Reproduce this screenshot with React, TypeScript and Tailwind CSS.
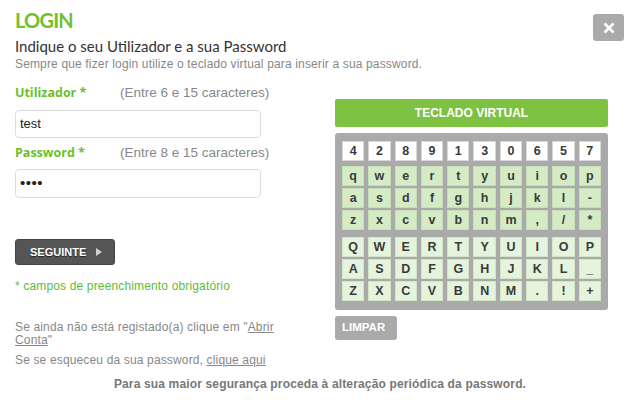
import React from "react";

const numbers = ["4", "2", "8", "9", "1", "3", "0", "6", "5", "7"];
const lower = [
  ["q", "w", "e", "r", "t", "y", "u", "i", "o", "p"],
  ["a", "s", "d", "f", "g", "h", "j", "k", "l", "-"],
  ["z", "x", "c", "v", "b", "n", "m", ",", "/", "*"],
];
const upper = [
  ["Q", "W", "E", "R", "T", "Y", "U", "I", "O", "P"],
  ["A", "S", "D", "F", "G", "H", "J", "K", "L", "_"],
  ["Z", "X", "C", "V", "B", "N", "M", ".", "!", "+"],
];

function Key({ k, variant }: { k: string; variant: "num" | "low" | "up" }) {
  const cls =
    variant === "num"
      ? "bg-white border-[#d8d8d8]"
      : variant === "low"
      ? "bg-[#d5ebc5] border-[#c6dfb5]"
      : "bg-[#e5f4dc] border-[#d3e6c7]";
  return (
    <div
      className={`h-[20px] flex items-center justify-center border text-[12.5px] font-bold text-[#3a3a3a] ${cls}`}
    >
      {k}
    </div>
  );
}

export default function App() {
  const sans = { fontFamily: '"Liberation Sans", Arial, sans-serif' };
  const lato = { fontFamily: 'Lato, "Open Sans", sans-serif' };
  const open = { fontFamily: '"Open Sans", sans-serif' };
  return (
    <div
      className="w-[640px] h-[400px] bg-white pl-[15px] pr-[16px] overflow-hidden"
      style={sans}
    >
      {/* Header */}
      <div className="flex justify-between items-start">
        <h1
          className="mt-[10px] text-[20px] leading-[20px] font-bold tracking-[-0.8px] text-[#72c02c]"
          style={lato}
        >
          LOGIN
        </h1>
        <button className="mt-[14px] w-[31px] h-[27px] bg-[#aaaaaa] rounded-[3px] flex items-center justify-center">
          <svg width="12" height="12" viewBox="0 0 12 12">
            <path d="M1.5 1.5 L10.5 10.5 M10.5 1.5 L1.5 10.5" stroke="white" strokeWidth="2.6" strokeLinecap="butt" />
          </svg>
        </button>
      </div>
      <div className="-mt-[4px] text-[15px] leading-[18px] text-[#333]" style={lato}>
        Indique o seu Utilizador e a sua Password
      </div>
      <div className="mt-[3px] text-[12px] leading-[13px] tracking-[0.15px] text-[#888]">
        Sempre que fizer login utilize o teclado virtual para inserir a sua password.
      </div>

      {/* Columns */}
      <div className="mt-[14px] flex">
        <div className="w-[305px] flex flex-col">
          <div className="h-[17px] flex items-center">
            <span className="text-[12.5px] font-bold text-[#6abf2c] w-[105px]" style={open}>
              Utilizador *
            </span>
            <span className="text-[13.5px] text-[#888]">(Entre 6 e 15 caracteres)</span>
          </div>
          <div className="mt-[8px] w-[246px] h-[28px] border border-[#dcdcdc] rounded-[4px] flex items-center px-[4px] text-[13px] text-[#222]">
            test
          </div>
          <div className="mt-[7px] h-[17px] flex items-center">
            <span className="text-[12.5px] font-bold text-[#6abf2c] w-[105px]" style={open}>
              Password *
            </span>
            <span className="text-[13.5px] text-[#888]">(Entre 8 e 15 caracteres)</span>
          </div>
          <div className="mt-[7px] w-[246px] h-[29px] border border-[#dcdcdc] rounded-[4px] flex items-center px-[4px] text-[15px] text-[#222] tracking-[0.5px]">
            ••••
          </div>
          <button className="mt-[41px] w-[100px] h-[26px] bg-[#555555] border border-[#444] rounded-[3px] flex items-center pl-[14px] gap-[10px]">
            <span className="text-[11px] font-bold text-white [text-shadow:0_1px_1px_rgba(0,0,0,0.6)]">SEGUINTE</span>
            <svg width="6" height="8" viewBox="0 0 6 8">
              <path d="M0 0 L6 4 L0 8 Z" fill="#d0d0d0" />
            </svg>
          </button>
          <div className="mt-[14px] text-[12px] leading-[14px] tracking-[0.15px] text-[#5fba3a]">
            * campos de preenchimento obrigatório
          </div>
          <div className="mt-[28px] w-[275px] text-[12px] leading-[13px] tracking-[0.15px] text-[#888]">
            Se ainda não está registado(a) clique em "<span className="underline">Abrir</span>{" "}
            <span className="underline">Conta</span>"
          </div>
          <div className="mt-[7px] text-[12px] leading-[13px] tracking-[0.15px] text-[#888]">
            Se se esqueceu da sua password, <span className="underline">clique aqui</span>
          </div>
        </div>

        <div className="ml-[15px] w-[273px] flex flex-col">
          <div className="mt-[14px] h-[28px] bg-[#7ec242] rounded-[2px] flex items-center justify-center text-[12px] font-bold text-white">
            TECLADO VIRTUAL
          </div>
          <div className="mt-[6px] h-[177px] bg-[#aaaaaa] rounded-[3px] px-[7px] pt-[8px]">
            <div className="grid grid-cols-10 gap-x-[4px]">
              {numbers.map((k) => (
                <Key key={k} k={k} variant="num" />
              ))}
            </div>
            <div className="mt-[5px] grid grid-cols-10 gap-x-[4px] gap-y-[2px]">
              {lower.flat().map((k, i) => (
                <Key key={"l" + i} k={k} variant="low" />
              ))}
            </div>
            <div className="mt-[7px] grid grid-cols-10 gap-x-[4px] gap-y-[2px]">
              {upper.flat().map((k, i) => (
                <Key key={"u" + i} k={k} variant="up" />
              ))}
            </div>
          </div>
          <button className="mt-[6px] w-[62px] h-[24px] bg-[#aaaaaa] rounded-[3px] flex items-center pl-[7px] text-[11.5px] font-bold text-white">
            LIMPAR
          </button>
        </div>
      </div>

      <div className="mt-[11px] -ml-[15px] w-[640px] text-center text-[12px] leading-[13px] tracking-[0.15px] font-bold text-[#777]">
        Para sua maior segurança proceda à alteração periódica da password.
      </div>
    </div>
  );
}
